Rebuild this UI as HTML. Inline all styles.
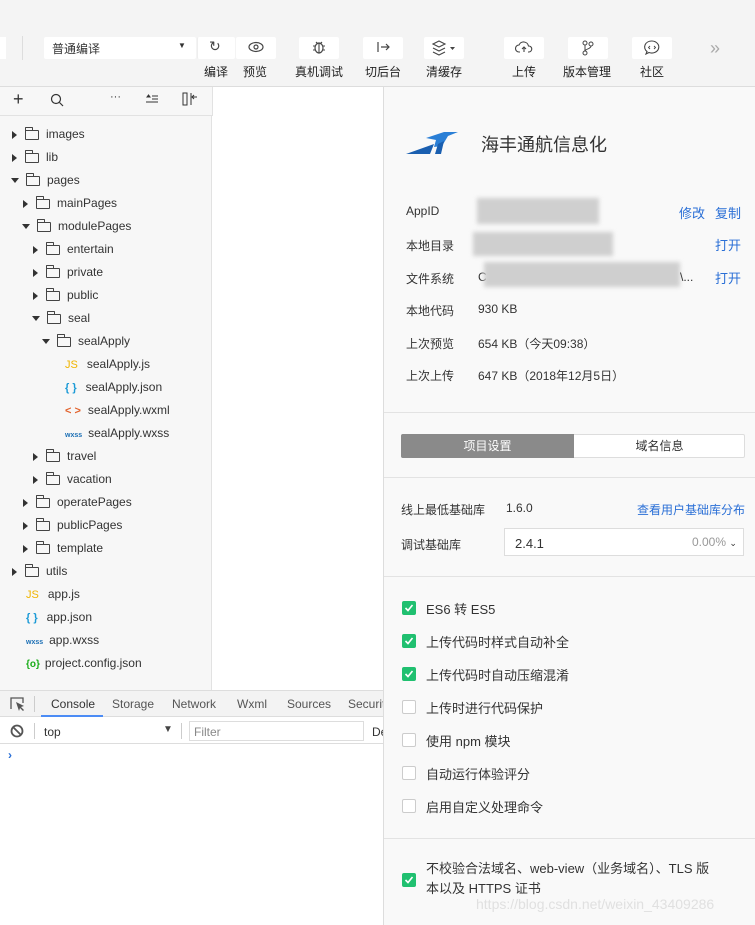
<!DOCTYPE html>
<html><head><meta charset="utf-8"><style>
*{margin:0;padding:0;box-sizing:border-box}
body{width:755px;height:925px;overflow:hidden;background:#f5f5f5;font-family:"Liberation Sans","Noto Sans CJK SC",sans-serif;font-size:12px;color:#333;position:relative}
.abs{position:absolute}
.tb{top:0;left:0;width:755px;height:87px;background:#f4f4f4;border-bottom:1px solid #ddd}
.btn{position:absolute;top:37px;height:22px;background:#fff;border-radius:2px}
.lbl{position:absolute;top:63px;font-size:12px;color:#222}
.tree{top:87px;left:0;width:212px;height:603px;background:#f7f7f7;border-right:1px solid #e2e2e2}
.row{position:absolute;height:23px;line-height:23px;font-size:12px;color:#333;white-space:nowrap}
.arr{display:inline-block;width:0;height:0;vertical-align:middle}
.ar{border-left:5px solid #333;border-top:4px solid transparent;border-bottom:4px solid transparent;margin-right:8px}
.ad{border-top:5px solid #333;border-left:4px solid transparent;border-right:4px solid transparent;margin-right:7px}
.fold{display:inline-block;width:14px;height:10px;border:1.3px solid #444;border-radius:1px;vertical-align:middle;margin-right:7px;position:relative;top:0px}
.fold::before{content:"";position:absolute;left:-1.3px;top:-4px;width:6px;height:3px;border:1.3px solid #444;border-bottom:none;border-radius:1px 1px 0 0}
.rp{top:87px;left:383px;width:372px;height:838px;background:#f9f9f9;border-left:1px solid #ddd}
.hr{position:absolute;left:0;width:372px;height:1px;background:#e3e3e3}
.k{position:absolute;left:22px;font-size:12px;color:#333}
.v{position:absolute;left:94px;font-size:12px;color:#333}
.blue{color:#2a6fd6}
.cb{position:absolute;left:18px;width:14px;height:14px;border-radius:2px}
.on{background:#20c070}
.off{border:1px solid #ccc;background:#fff}
.cbt{position:absolute;left:42px;font-size:13px;color:#333}
.blur{position:absolute;background:#cfcfcf;filter:blur(2px)}
</style></head><body>
<div class="abs tb"></div>
<div class="abs" style="left:0;top:37px;width:6px;height:22px;background:#fff"></div>
<div class="abs" style="left:22px;top:36px;width:1px;height:24px;background:#ddd"></div>
<div class="btn" style="left:44px;width:152px"></div>
<div class="abs" style="left:52px;top:40px;font-size:12px">普通编译</div>
<div class="abs" style="left:178px;top:41px;font-size:8px">▼</div>
<div class="btn" style="left:197px;width:38px;border-left:1px solid #eee"></div>
<div class="abs" style="left:209px;top:38px;font-size:14px;color:#444">↻</div>
<div class="btn" style="left:236px;width:40px"></div>
<svg class="abs" style="left:248px;top:41px" width="16" height="12"><ellipse cx="8" cy="6" rx="7" ry="4.5" fill="none" stroke="#444" stroke-width="1.2"/><circle cx="8" cy="6" r="2" fill="none" stroke="#444" stroke-width="1.2"/></svg>
<div class="btn" style="left:299px;width:40px"></div>
<svg class="abs" style="left:312px;top:39px" width="14" height="16"><ellipse cx="7" cy="9" rx="4" ry="5" fill="none" stroke="#444" stroke-width="1.2"/><path d="M7 4v10M1 7h2M11 7h2M1 11h2M11 11h2M4 3l2 2M10 3l-2 2" stroke="#444" stroke-width="1.1"/></svg>
<div class="btn" style="left:363px;width:40px"></div>
<svg class="abs" style="left:376px;top:41px" width="14" height="12"><path d="M5 6h8M10 3l3 3-3 3" stroke="#444" stroke-width="1.2" fill="none"/><path d="M2 1v10" stroke="#444" stroke-width="1.2"/></svg>
<div class="btn" style="left:424px;width:40px"></div>
<svg class="abs" style="left:432px;top:40px" width="24" height="16"><path d="M1 4l6-3 6 3-6 3zM1 8l6 3 6-3M1 12l6 3 6-3" fill="none" stroke="#444" stroke-width="1.1"/><path d="M18 7h5l-2.5 3z" fill="#444"/></svg>
<div class="btn" style="left:504px;width:40px"></div>
<svg class="abs" style="left:515px;top:40px" width="18" height="14"><path d="M5 12H4a3.5 3.5 0 010-7 5 5 0 019.5 1A3 3 0 0114 12h-1M9 12V7M7 9l2-2 2 2" fill="none" stroke="#444" stroke-width="1.1"/></svg>
<div class="btn" style="left:568px;width:40px"></div>
<svg class="abs" style="left:582px;top:40px" width="12" height="16"><circle cx="3" cy="3" r="2" fill="none" stroke="#444"/><circle cx="9" cy="4" r="2" fill="none" stroke="#444"/><circle cx="3" cy="13" r="2" fill="none" stroke="#444"/><path d="M3 5v6M9 6c0 3-6 3-6 5" fill="none" stroke="#444"/></svg>
<div class="btn" style="left:632px;width:40px"></div>
<svg class="abs" style="left:643px;top:39px" width="18" height="17"><path d="M9 2a7 6 0 00-5 10.5L3 15l3-1.5A7 6 0 109 2z" fill="none" stroke="#444" stroke-width="1.1"/><path d="M7 7l-1.5 1.5L7 10M11 7l1.5 1.5L11 10" fill="none" stroke="#444" stroke-width=".9"/></svg>
<div class="abs" style="left:710px;top:38px;font-size:18px;color:#aaa">»</div>
<div class="lbl" style="left:204px">编译</div>
<div class="lbl" style="left:243px">预览</div>
<div class="lbl" style="left:295px">真机调试</div>
<div class="lbl" style="left:365px">切后台</div>
<div class="lbl" style="left:426px">清缓存</div>
<div class="lbl" style="left:512px">上传</div>
<div class="lbl" style="left:563px">版本管理</div>
<div class="lbl" style="left:640px">社区</div>

<div class="abs" style="top:87px;left:0;width:383px;height:29px;background:#f7f7f7;border-bottom:1px solid #e2e2e2"></div>
<div class="abs" style="top:87px;left:212px;width:171px;height:603px;background:#fff"></div>
<div class="abs" style="top:87px;left:212px;width:1px;height:29px;background:#e2e2e2"></div>
<div class="abs" style="left:13px;top:89px;font-size:18px;color:#333">+</div>
<svg class="abs" style="left:50px;top:93px" width="14" height="14"><circle cx="6" cy="6" r="4.5" fill="none" stroke="#333" stroke-width="1.2"/><path d="M9.5 9.5L13 13" stroke="#333" stroke-width="1.2"/></svg>
<div class="abs" style="left:110px;top:91px;font-size:11px">···</div>
<svg class="abs" style="left:145px;top:94px" width="14" height="10"><path d="M2 3l1.5-2L5 3zM7 2h6M7 5h6M1 8h12" stroke="#333" fill="#333" stroke-width="1"/></svg>
<svg class="abs" style="left:182px;top:92px" width="16" height="14"><rect x="1" y="1" width="4" height="12" fill="none" stroke="#333"/><path d="M9 1v12M15 5h-5M12 3l-2 2 2 2" fill="none" stroke="#333"/></svg>
<div class="abs tree" style="top:116px;height:574px"></div>
<div class="row" style="left:12px;top:123px"><span class="arr ar"></span><span class="fold"></span>images</div>
<div class="row" style="left:12px;top:146px"><span class="arr ar"></span><span class="fold"></span>lib</div>
<div class="row" style="left:11px;top:169px"><span class="arr ad"></span><span class="fold"></span>pages</div>
<div class="row" style="left:23px;top:192px"><span class="arr ar"></span><span class="fold"></span>mainPages</div>
<div class="row" style="left:22px;top:215px"><span class="arr ad"></span><span class="fold"></span>modulePages</div>
<div class="row" style="left:33px;top:238px"><span class="arr ar"></span><span class="fold"></span>entertain</div>
<div class="row" style="left:33px;top:261px"><span class="arr ar"></span><span class="fold"></span>private</div>
<div class="row" style="left:33px;top:284px"><span class="arr ar"></span><span class="fold"></span>public</div>
<div class="row" style="left:32px;top:307px"><span class="arr ad"></span><span class="fold"></span>seal</div>
<div class="row" style="left:42px;top:330px"><span class="arr ad"></span><span class="fold"></span>sealApply</div>
<div class="row" style="left:65px;top:353px"><span style="color:#f0b400;font-size:11px;margin-right:9px">JS</span>sealApply.js</div>
<div class="row" style="left:65px;top:376px"><span style="color:#1b9ad6;font-size:11px;font-weight:bold;margin-right:9px">{ }</span>sealApply.json</div>
<div class="row" style="left:65px;top:399px"><span style="color:#e2622c;font-size:11px;font-weight:bold;margin-right:7px">&lt; &gt;</span>sealApply.wxml</div>
<div class="row" style="left:65px;top:422px"><span style="color:#1b6fb5;font-size:7px;font-weight:bold;margin-right:6px">wxss</span>sealApply.wxss</div>
<div class="row" style="left:33px;top:445px"><span class="arr ar"></span><span class="fold"></span>travel</div>
<div class="row" style="left:33px;top:468px"><span class="arr ar"></span><span class="fold"></span>vacation</div>
<div class="row" style="left:23px;top:491px"><span class="arr ar"></span><span class="fold"></span>operatePages</div>
<div class="row" style="left:23px;top:514px"><span class="arr ar"></span><span class="fold"></span>publicPages</div>
<div class="row" style="left:23px;top:537px"><span class="arr ar"></span><span class="fold"></span>template</div>
<div class="row" style="left:12px;top:560px"><span class="arr ar"></span><span class="fold"></span>utils</div>
<div class="row" style="left:26px;top:583px"><span style="color:#f0b400;font-size:11px;margin-right:9px">JS</span>app.js</div>
<div class="row" style="left:26px;top:606px"><span style="color:#1b9ad6;font-size:11px;font-weight:bold;margin-right:9px">{ }</span>app.json</div>
<div class="row" style="left:26px;top:629px"><span style="color:#1b6fb5;font-size:7px;font-weight:bold;margin-right:6px">wxss</span>app.wxss</div>
<div class="row" style="left:26px;top:652px"><span style="color:#1aad19;font-size:10px;font-weight:bold;margin-right:5px">{o}</span>project.config.json</div>

<div class="abs" style="top:690px;left:0;width:383px;height:235px;background:#fff"></div>
<div class="abs" style="top:690px;left:0;width:383px;height:27px;background:#f3f3f3;border-top:1px solid #ddd;border-bottom:1px solid #ddd"></div>
<svg class="abs" style="left:10px;top:697px" width="15" height="14"><path d="M1 12V1h12v5" fill="none" stroke="#555" stroke-width="1.3"/><path d="M6 5l8 4-3 1 3 3-1 1-3-3-1 3z" fill="#555"/></svg>
<div class="abs" style="left:34px;top:696px;width:1px;height:16px;background:#ccc"></div>
<div class="abs" style="left:41px;top:715px;width:62px;height:2px;background:#4c8cf5"></div>
<div class="abs" style="left:51px;top:697px;color:#333">Console</div>
<div class="abs" style="left:112px;top:697px;color:#555">Storage</div>
<div class="abs" style="left:172px;top:697px;color:#555">Network</div>
<div class="abs" style="left:237px;top:697px;color:#555">Wxml</div>
<div class="abs" style="left:287px;top:697px;color:#555">Sources</div>
<div class="abs" style="left:348px;top:697px;color:#555">Securit</div>
<div class="abs" style="top:717px;left:0;width:383px;height:27px;border-bottom:1px solid #ddd"></div>
<svg class="abs" style="left:10px;top:724px" width="14" height="14"><circle cx="7" cy="7" r="5.5" fill="none" stroke="#555" stroke-width="1.8"/><path d="M3 3l8 8" stroke="#555" stroke-width="1.8"/></svg>
<div class="abs" style="left:34px;top:723px;width:1px;height:16px;background:#ccc"></div>
<div class="abs" style="left:44px;top:725px;color:#333">top</div>
<div class="abs" style="left:163px;top:724px;font-size:10px;color:#444">▼</div>
<div class="abs" style="left:181px;top:723px;width:1px;height:16px;background:#ccc"></div>
<div class="abs" style="left:189px;top:721px;width:175px;height:20px;border:1px solid #ddd"></div>
<div class="abs" style="left:194px;top:725px;color:#888">Filter</div>
<div class="abs" style="left:372px;top:725px;color:#333">De</div>
<div class="abs" style="left:8px;top:748px;color:#2a6fd6;font-weight:bold">›</div>

<div class="abs rp">
 <svg class="abs" style="left:20px;top:43px" width="55" height="26"><path d="M22 8L40 2h14L44 6 38 16 30 17 32 10z" fill="#2a7fd6"/><path d="M2 24L30 14l-4 10z" fill="#1a5fb0"/><path d="M34 14l6-3-3 13h-6z" fill="#1a5fb0"/></svg>
 <div class="abs" style="left:97px;top:44px;font-size:18px;color:#333">海丰通航信息化</div>
 <div class="k" style="top:117px">AppID</div>
 <div class="blur" style="left:93px;top:111px;width:122px;height:26px"></div>
 <div class="abs blue" style="left:295px;top:116px;font-size:13px">修改</div>
 <div class="abs blue" style="left:331px;top:116px;font-size:13px">复制</div>
 <div class="k" style="top:150px">本地目录</div>
 <div class="blur" style="left:89px;top:145px;width:140px;height:24px"></div>
 <div class="abs blue" style="left:331px;top:148px;font-size:13px">打开</div>
 <div class="k" style="top:183px">文件系统</div>
 <div class="v" style="top:183px">C</div>
 <div class="blur" style="left:100px;top:175px;width:196px;height:25px"></div>
 <div class="abs" style="left:296px;top:183px">\...</div>
 <div class="abs blue" style="left:331px;top:181px;font-size:13px">打开</div>
 <div class="k" style="top:215px">本地代码</div><div class="v" style="top:215px">930 KB</div>
 <div class="k" style="top:248px">上次预览</div><div class="v" style="top:248px">654 KB（今天09:38）</div>
 <div class="k" style="top:280px">上次上传</div><div class="v" style="top:280px">647 KB（2018年12月5日）</div>
 <div class="hr" style="top:325px"></div>
 <div class="abs" style="left:17px;top:347px;width:344px;height:24px;border:1px solid #ddd;border-radius:2px;background:#fff"></div>
 <div class="abs" style="left:17px;top:347px;width:173px;height:24px;background:#8a8a8a;border-radius:2px 0 0 2px;color:#fff;text-align:center;line-height:24px;font-size:12px">项目设置</div>
 <div class="abs" style="left:190px;top:347px;width:171px;height:24px;text-align:center;line-height:24px;font-size:12px">域名信息</div>
 <div class="hr" style="top:390px"></div>
 <div class="abs" style="left:17px;top:414px">线上最低基础库</div>
 <div class="abs" style="left:122px;top:414px">1.6.0</div>
 <div class="abs blue" style="left:253px;top:414px">查看用户基础库分布</div>
 <div class="abs" style="left:17px;top:449px">调试基础库</div>
 <div class="abs" style="left:120px;top:441px;width:240px;height:28px;border:1px solid #ddd;background:#fff"></div>
 <div class="abs" style="left:131px;top:449px;font-size:13px">2.4.1</div>
 <div class="abs" style="left:308px;top:448px;color:#999">0.00% <span style="color:#333;font-size:9px">⌄</span></div>
 <div class="hr" style="top:489px"></div>
 <div class="cb on" style="top:514px"></div><svg class="abs" style="left:20px;top:516px" width="10" height="10"><path d="M1.5 5l2.5 2.5L8.5 2" stroke="#fff" stroke-width="1.6" fill="none"/></svg><div class="cbt" style="top:512px">ES6 转 ES5</div>
 <div class="cb on" style="top:547px"></div><svg class="abs" style="left:20px;top:549px" width="10" height="10"><path d="M1.5 5l2.5 2.5L8.5 2" stroke="#fff" stroke-width="1.6" fill="none"/></svg><div class="cbt" style="top:545px">上传代码时样式自动补全</div>
 <div class="cb on" style="top:580px"></div><svg class="abs" style="left:20px;top:582px" width="10" height="10"><path d="M1.5 5l2.5 2.5L8.5 2" stroke="#fff" stroke-width="1.6" fill="none"/></svg><div class="cbt" style="top:578px">上传代码时自动压缩混淆</div>
 <div class="cb off" style="top:613px"></div><div class="cbt" style="top:611px">上传时进行代码保护</div>
 <div class="cb off" style="top:646px"></div><div class="cbt" style="top:644px">使用 npm 模块</div>
 <div class="cb off" style="top:679px"></div><div class="cbt" style="top:677px">自动运行体验评分</div>
 <div class="cb off" style="top:712px"></div><div class="cbt" style="top:710px">启用自定义处理命令</div>
 <div class="hr" style="top:751px"></div>
 <div class="cb on" style="top:786px"></div><svg class="abs" style="left:20px;top:788px" width="10" height="10"><path d="M1.5 5l2.5 2.5L8.5 2" stroke="#fff" stroke-width="1.6" fill="none"/></svg>
 <div class="cbt" style="top:772px;width:292px;line-height:20px">不校验合法域名、web-view（业务域名）、TLS 版本以及 HTTPS 证书</div>
 <div class="abs" style="left:92px;top:809px;font-size:14px;color:#e0e0e0">https://blog.csdn.net/weixin_43409286</div>
</div>
</body></html>
